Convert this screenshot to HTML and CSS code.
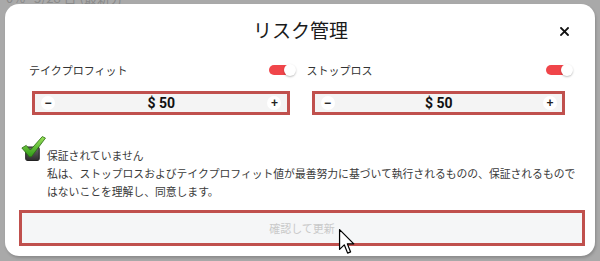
FILE: index.html
```html
<!DOCTYPE html>
<html lang="ja">
<head>
<meta charset="utf-8">
<title>リスク管理</title>
<link rel="stylesheet" href="styles.css">
</head>
<body>
<div class="backdrop">
  <div class="bg-line">0%&nbsp;&nbsp; 3/28 日 (最新分</div>
</div>
<div class="modal">
  <div class="header">
    <h1 class="title">リスク管理</h1>
    <button class="close" aria-label="閉じる">
      <svg width="9" height="9" viewBox="0 0 9 9"><path d="M1 1L8 8M8 1L1 8" stroke="#111" stroke-width="1.8" stroke-linecap="square"/></svg>
    </button>
  </div>
  <div class="cols">
    <div class="col">
      <div class="row">
        <span class="label">テイクプロフィット</span>
        <span class="toggle"><span class="knob"></span></span>
      </div>
      <div class="stepper">
        <span class="step">−</span>
        <span class="value">$ 50</span>
        <span class="step">+</span>
      </div>
    </div>
    <div class="col">
      <div class="row">
        <span class="label">ストップロス</span>
        <span class="toggle"><span class="knob"></span></span>
      </div>
      <div class="stepper stepper-r">
        <span class="step">−</span>
        <span class="value">$ 50</span>
        <span class="step">+</span>
      </div>
    </div>
  </div>
  <div class="notice">
    <svg class="check" width="25" height="27" viewBox="0 0 24 26">
      <defs>
        <linearGradient id="box" x1="0" y1="0" x2="0" y2="1">
          <stop offset="0" stop-color="#6b6b6b"/>
          <stop offset="1" stop-color="#2e2e2e"/>
        </linearGradient>
        <linearGradient id="tick" x1="0" y1="0" x2="0" y2="1">
          <stop offset="0" stop-color="#9be35a"/>
          <stop offset="1" stop-color="#2f9a18"/>
        </linearGradient>
      </defs>
      <rect x="4.5" y="11.5" width="13" height="13" rx="2" fill="url(#box)" stroke="#222"/>
      <path d="M0.8 12.5 L5 10 L9 14.5 L20.5 1.5 L23.5 3 L10 21 L8 21 Z" fill="url(#tick)" stroke="#2a6e12" stroke-width="0.8" stroke-linejoin="round"/>
    </svg>
    <div class="notice-text">
      <div>保証されていません</div>
      <div>私は、ストップロスおよびテイクプロフィット値が最善努力に基づいて執行されるものの、保証されるもので<br>はないことを理解し、同意します。</div>
    </div>
  </div>
  <button class="confirm">確認して更新</button>
</div>
<svg class="cursor" width="18" height="26" viewBox="0 0 13 21">
  <path d="M0.5 0.5 L0.5 16.5 L4.3 12.8 L7 19.5 L9.4 18.5 L6.8 12 L12 12 Z" fill="#fff" stroke="#000" stroke-width="1" stroke-linejoin="round"/>
</svg>
</body>
</html>
```

FILE: styles.css
```css
* { box-sizing: border-box; }
html, body { margin: 0; padding: 0; }
body {
  width: 600px;
  height: 261px;
  overflow: hidden;
  background: #a9a9a9;
  font-family: "Noto Sans CJK JP", "Noto Sans", sans-serif;
  color: #333;
  position: relative;
}
.backdrop { color: #8a8a8a; font-size: 13px; }
.bg-line { margin-top: -9px; padding-left: 6px; line-height: 14px; }

.modal {
  position: absolute;
  left: 5px;
  top: 4px;
  width: 590px;
  height: 252px;
  background: #fff;
  border-radius: 14px;
  box-shadow: 1px 2px 3px rgba(0,0,0,0.18);
  padding: 14px 23px 10px 24px;
  display: flex;
  flex-direction: column;
}
.header {
  display: flex;
  justify-content: center;
  align-items: center;
  position: relative;
  height: 24px;
}
.title {
  margin: 0;
  font-weight: 400;
  font-size: 19px;
  line-height: 24px;
  color: #1a1a1a;
}
.close {
  position: absolute;
  right: 3px;
  top: 9px;
  border: 0;
  background: none;
  padding: 0;
  width: 9px;
  height: 9px;
  display: flex;
}
.cols {
  margin-top: 20px;
  display: grid;
  grid-template-columns: 1fr 1fr;
  column-gap: 12px;
}
.row {
  display: flex;
  justify-content: space-between;
  align-items: center;
  height: 16px;
}
.label {
  font-size: 11px;
  line-height: 16px;
  color: #333;
}
.toggle {
  position: relative;
  width: 24px;
  height: 10px;
  background: #f0454a;
  border-radius: 5px;
  margin-right: 2px;
}
.knob {
  position: absolute;
  right: -3px;
  top: -1px;
  width: 12px;
  height: 12px;
  border-radius: 50%;
  background: #fff;
  box-shadow: 0 1px 2px rgba(0,0,0,0.25);
}
.stepper {
  margin: 13px 5px 0 3px;
  height: 24px;
  border: 3px solid #c0504d;
  background: #f4f4f4;
  display: flex;
  align-items: center;
  justify-content: space-between;
  padding: 0 5px 0 6px;
}
.stepper-r { margin: 13px 7px 0 5px; }
.step {
  width: 14px;
  height: 14px;
  border-radius: 50%;
  background: #fff;
  display: flex;
  align-items: center;
  justify-content: center;
  font-family: "Liberation Sans", sans-serif;
  font-size: 12px;
  font-weight: 700;
  color: #222;
  line-height: 1;
}
.value {
  font-family: "Roboto", "Liberation Sans", sans-serif;
  font-weight: 700;
  font-size: 14px;
  color: #111;
}
.notice {
  margin: 25px 0 0 -8px;
  display: flex;
  align-items: flex-start;
  gap: 1px;
}
.check { flex: none; margin-top: -5px; }
.notice-text {
  padding-top: 6px;
  font-size: 10.8px;
  line-height: 18px;
  color: #3a3a3a;
  white-space: nowrap;
}
.confirm {
  margin: 10px -13px 0 -10px;
  height: 36px;
  border: 3px solid #c0504d;
  background: #f5f6f7;
  color: #c9c9c9;
  font-family: "Noto Sans CJK JP", sans-serif;
  font-size: 11px;
  padding: 0;
}
.cursor {
  position: absolute;
  left: 338px;
  top: 229px;
}
```
